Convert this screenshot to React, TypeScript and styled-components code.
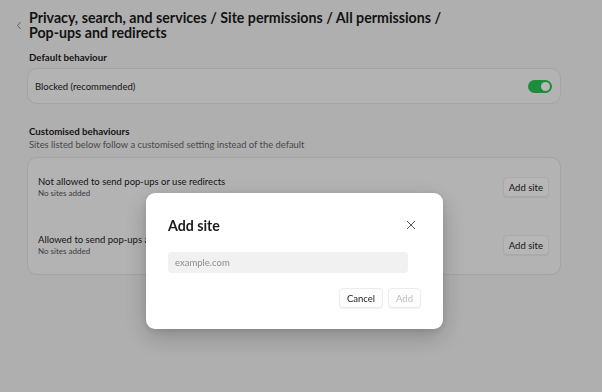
import React from "react";
import styled, { createGlobalStyle } from "styled-components";

const GlobalStyle = createGlobalStyle`
  html, body { margin: 0; padding: 0; }
  body {
    background: #f3f3f3;
    font-family: Lato, "Noto Sans", sans-serif;
    color: #1b1b1b;
    width: 602px;
    height: 392px;
    overflow: hidden;
  }
`;

const Page = styled.div`
  display: flex;
  flex-direction: column;
  padding: 10px 41px 0 27px;
  width: 602px;
  height: 392px;
  box-sizing: border-box;
`;

const Header = styled.div`
  display: flex;
  align-items: flex-start;
  margin-left: -16px;
`;

const BackButton = styled.button`
  width: 16px;
  height: 30px;
  border: none;
  background: none;
  padding: 0;
  margin: 0 1px 0 0;
  display: flex;
  align-items: center;
  justify-content: center;
  color: #8a8a8a;
`;

const Title = styled.h1`
  margin: 0;
  font-size: 14.2px;
  line-height: 15px;
  font-weight: 700;
  max-width: 440px;
  padding-left: 1px;
`;

const SectionTitle = styled.h2<{ $top: number }>`
  margin: ${(p) => p.$top}px 0 0 2px;
  font-size: 9.7px;
  line-height: 14px;
  font-weight: 700;
`;

const SectionSub = styled.p`
  margin: 0 0 0 2px;
  font-size: 9.4px;
  line-height: 13px;
  color: #666;
`;

const Card = styled.div<{ $top: number }>`
  margin-top: ${(p) => p.$top}px;
  background: #f8f8f8;
  border: 1px solid #e3e3e3;
  border-radius: 10px;
  display: flex;
  flex-direction: column;
`;

const ToggleRow = styled.div`
  height: 34px;
  display: flex;
  align-items: center;
  justify-content: space-between;
  padding: 0 8px 0 7px;
  font-size: 9.5px;
`;

const Toggle = styled.div<{ $on: boolean }>`
  width: 24px;
  height: 13px;
  border-radius: 7px;
  background: ${(p) => (p.$on ? "#2ac253" : "#ccc")};
  display: flex;
  align-items: center;
  justify-content: ${(p) => (p.$on ? "flex-end" : "flex-start")};
  padding: 0 2px;
  box-sizing: border-box;
`;

const Knob = styled.div`
  width: 9px;
  height: 9px;
  border-radius: 50%;
  background: #fff;
`;

const SiteRow = styled.div`
  height: 58px;
  display: flex;
  align-items: center;
  justify-content: space-between;
  padding: 0 11px 0 10px;
`;

const RowText = styled.div`
  display: flex;
  flex-direction: column;
`;

const RowLabel = styled.span`
  font-size: 9.5px;
  line-height: 12px;
`;

const RowHint = styled.span`
  font-size: 8px;
  line-height: 10px;
  color: #555;
`;

const SmallButton = styled.button<{ $disabled?: boolean; $pad?: number }>`
  height: 20px;
  padding: 0 ${(p) => p.$pad ?? 5}px;
  border: 1px solid #ececec;
  border-radius: 4px;
  background: #fdfdfd;
  font-family: inherit;
  font-size: 9.5px;
  color: ${(p) => (p.$disabled ? "#bdbdbd" : "#1b1b1b")};
  box-shadow: 0 1px 1px rgba(0, 0, 0, 0.06);
`;

const Overlay = styled.div`
  position: fixed;
  inset: 0;
  background: rgba(0, 0, 0, 0.28);
  display: flex;
  justify-content: center;
  align-items: flex-start;
  padding: 193px 13px 0 0;
  box-sizing: border-box;
`;

const Dialog = styled.div`
  width: 297px;
  background: #fff;
  border-radius: 9px;
  box-shadow: 0 8px 24px rgba(0, 0, 0, 0.22), 0 2px 6px rgba(0, 0, 0, 0.1);
  padding: 21px 20px 21px 22px;
  box-sizing: border-box;
  display: flex;
  flex-direction: column;
`;

const DialogHeader = styled.div`
  display: flex;
  align-items: center;
  justify-content: space-between;
  height: 22px;
`;

const DialogTitle = styled.h3`
  margin: 0;
  font-size: 14.2px;
  font-weight: 700;
`;

const CloseButton = styled.button`
  width: 24px;
  height: 24px;
  border: none;
  background: none;
  padding: 0;
  display: flex;
  align-items: center;
  justify-content: center;
  color: #555;
`;

const Input = styled.input`
  margin-top: 16px;
  width: 240px;
  height: 21px;
  box-sizing: border-box;
  border: none;
  border-radius: 4px;
  background: #f1f1f1;
  padding: 0 7px;
  font-family: inherit;
  font-size: 9.5px;
  color: #1b1b1b;
  outline: none;
  &::placeholder { color: #8c8c8c; }
`;

const Footer = styled.div`
  margin-top: 15px;
  display: flex;
  justify-content: flex-end;
  gap: 5px;
  padding-right: 2px;
`;

export default function App() {
  return (
    <>
      <GlobalStyle />
      <Page>
        <Header>
          <BackButton aria-label="Back">
            <svg width="6" height="9" viewBox="0 0 6 9">
              <path d="M4.5 1 L1.5 4.5 L4.5 8" fill="none" stroke="currentColor" strokeWidth="1" />
            </svg>
          </BackButton>
          <Title>Privacy, search, and services / Site permissions / All permissions / Pop-ups and redirects</Title>
        </Header>
        <SectionTitle $top={10}>Default behaviour</SectionTitle>
        <Card $top={4}>
          <ToggleRow>
            <span>Blocked (recommended)</span>
            <Toggle $on>
              <Knob />
            </Toggle>
          </ToggleRow>
        </Card>
        <SectionTitle $top={20}>Customised behaviours</SectionTitle>
        <SectionSub>Sites listed below follow a customised setting instead of the default</SectionSub>
        <Card $top={6}>
          <SiteRow>
            <RowText>
              <RowLabel>Not allowed to send pop-ups or use redirects</RowLabel>
              <RowHint>No sites added</RowHint>
            </RowText>
            <SmallButton>Add site</SmallButton>
          </SiteRow>
          <SiteRow>
            <RowText>
              <RowLabel>Allowed to send pop-ups and use redirects</RowLabel>
              <RowHint>No sites added</RowHint>
            </RowText>
            <SmallButton>Add site</SmallButton>
          </SiteRow>
        </Card>
      </Page>
      <Overlay>
        <Dialog>
          <DialogHeader>
            <DialogTitle>Add site</DialogTitle>
            <CloseButton aria-label="Close">
              <svg width="10" height="10" viewBox="0 0 10 10">
                <path d="M1 1 L9 9 M9 1 L1 9" stroke="currentColor" strokeWidth="1" />
              </svg>
            </CloseButton>
          </DialogHeader>
          <Input placeholder="example.com" />
          <Footer>
            <SmallButton $pad={7}>Cancel</SmallButton>
            <SmallButton $pad={7} $disabled>Add</SmallButton>
          </Footer>
        </Dialog>
      </Overlay>
    </>
  );
}
